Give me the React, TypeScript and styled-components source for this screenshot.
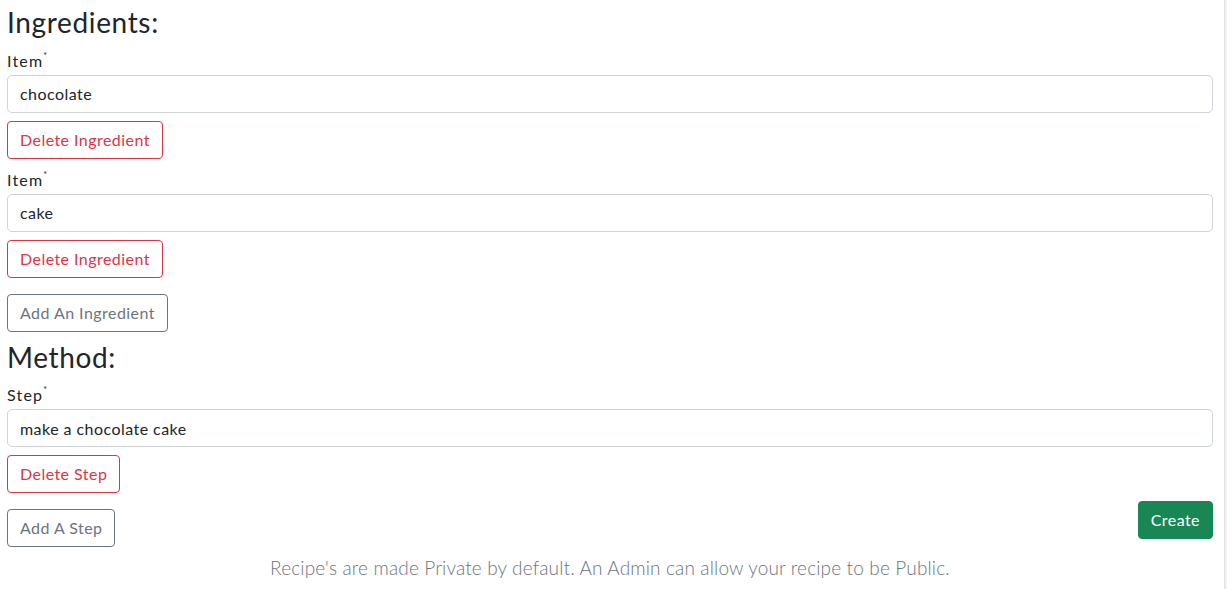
import React, { useState } from 'react';
import styled, { createGlobalStyle } from 'styled-components';

const GlobalStyle = createGlobalStyle`
  * { box-sizing: border-box; }
  html, body {
    margin: 0;
    padding: 0;
    background: #fff;
    font-family: Lato, "Open Sans", sans-serif;
    color: #212529;
    letter-spacing: 0.45px;
  }
`;

const Page = styled.div`
  display: flex;
  min-height: 589px;
`;

const Main = styled.form`
  flex: 1;
  padding: 0 11px 0 7px;
`;

const Gutter = styled.div`
  width: 3px;
  background: #f1f1f1;
  border-left: 1px solid #e4e4e4;
`;

const Heading = styled.h3<{ spaced?: boolean }>`
  margin: ${({ spaced }) => (spaced ? '9px' : '6px')} 0 9px;
  font-size: 28px;
  font-weight: 400;
  line-height: 1.2;
  letter-spacing: 0.65px;
`;

const Field = styled.div<{ first?: boolean }>`
  margin-top: ${({ first }) => (first ? '0' : '9px')};
`;

const Label = styled.label`
  display: block;
  margin-bottom: 2px;
  font-size: 16px;
  line-height: 24px;
  letter-spacing: 1.2px;

  sup {
    font-size: 9px;
    vertical-align: top;
    line-height: 14px;
    margin-left: 0;
  }
`;

const Input = styled.input`
  display: block;
  width: 100%;
  height: 38px;
  padding: 6px 12px;
  font-family: inherit;
  font-size: 16px;
  letter-spacing: inherit;
  color: #212529;
  border: 1px solid #ced4da;
  border-radius: 5px;
  outline: none;
`;

const variants = {
  danger: { color: '#dc3545', border: '#dc3545', bg: 'transparent' },
  secondary: { color: '#6c757d', border: '#6c757d', bg: 'transparent' },
  success: { color: '#fff', border: '#198754', bg: '#198754' },
};

const Button = styled.button<{ variant: keyof typeof variants; gap?: number }>`
  display: inline-block;
  height: 38px;
  margin-top: ${({ gap }) => gap ?? 8}px;
  padding: 0 12px;
  font-family: inherit;
  font-size: 16px;
  letter-spacing: inherit;
  line-height: 36px;
  border-radius: 4px;
  cursor: pointer;
  color: ${({ variant }) => variants[variant].color};
  border: 1px solid ${({ variant }) => variants[variant].border};
  background: ${({ variant }) => variants[variant].bg};
`;

const Footer = styled.div`
  display: flex;
  justify-content: space-between;
  align-items: flex-start;
`;

const Note = styled.p`
  margin: 7px 0 0;
  text-align: center;
  font-size: 19px;
  font-weight: 300;
  line-height: 1.5;
  letter-spacing: 0.15px;
  color: #6c757d;
`;

export default function App() {
  const [items, setItems] = useState(['chocolate', 'cake']);
  const [steps, setSteps] = useState(['make a chocolate cake']);

  return (
    <Page>
      <GlobalStyle />
      <Main onSubmit={(e) => e.preventDefault()}>
        <Heading>Ingredients:</Heading>
        {items.map((item, i) => (
          <Field key={i} first={i === 0}>
            <Label>
              Item<sup>*</sup>
            </Label>
            <Input
              value={item}
              onChange={(e) => setItems(items.map((v, j) => (j === i ? e.target.value : v)))}
            />
            <Button type="button" variant="danger" onClick={() => setItems(items.filter((_, j) => j !== i))}>
              Delete Ingredient
            </Button>
          </Field>
        ))}
        <Button type="button" variant="secondary" gap={16} onClick={() => setItems([...items, ''])}>
          Add An Ingredient
        </Button>

        <Heading spaced>Method:</Heading>
        {steps.map((step, i) => (
          <Field key={i} first={i === 0}>
            <Label>
              Step<sup>*</sup>
            </Label>
            <Input
              value={step}
              onChange={(e) => setSteps(steps.map((v, j) => (j === i ? e.target.value : v)))}
            />
            <Button type="button" variant="danger" onClick={() => setSteps(steps.filter((_, j) => j !== i))}>
              Delete Step
            </Button>
          </Field>
        ))}
        <Footer>
          <Button type="button" variant="secondary" gap={16} onClick={() => setSteps([...steps, ''])}>
            Add A Step
          </Button>
          <Button type="submit" variant="success">
            Create
          </Button>
        </Footer>
        <Note>Recipe's are made Private by default. An Admin can allow your recipe to be Public.</Note>
      </Main>
      <Gutter />
    </Page>
  );
}
